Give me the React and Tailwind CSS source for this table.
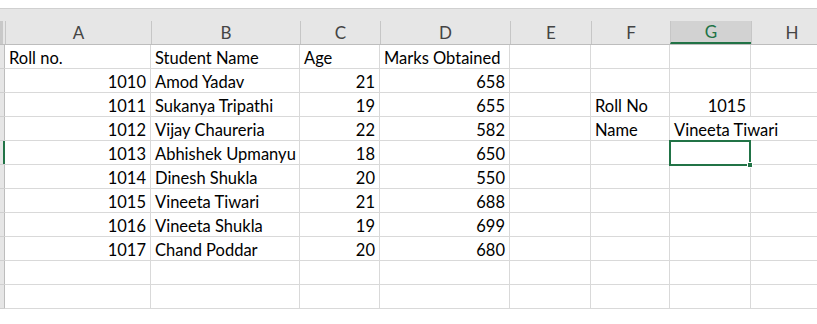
const columns = [
  { key: "A", width: "w-[146px]" },
  { key: "B", width: "w-[149px]" },
  { key: "C", width: "w-[80px]" },
  { key: "D", width: "w-[130px]" },
  { key: "E", width: "w-[81px]" },
  { key: "F", width: "w-[79px]" },
  { key: "G", width: "w-[81px]" },
  { key: "H", width: "w-[81px]" },
];

// each row: values for A..H, numbers are right aligned like excel
const rows = [
  ["Roll no.", "Student Name", "Age", "Marks Obtained", "", "", "", ""],
  [1010, "Amod Yadav", 21, 658, "", "", "", ""],
  [1011, "Sukanya Tripathi", 19, 655, "", "Roll No", 1015, ""],
  [1012, "Vijay Chaureria", 22, 582, "", "Name", "Vineeta Tiwari", ""],
  [1013, "Abhishek Upmanyu", 18, 650, "", "", "", ""],
  [1014, "Dinesh Shukla", 20, 550, "", "", "", ""],
  [1015, "Vineeta Tiwari", 21, 688, "", "", "", ""],
  [1016, "Vineeta Shukla", 19, 699, "", "", "", ""],
  [1017, "Chand Poddar", 20, 680, "", "", "", ""],
  ["", "", "", "", "", "", "", ""],
  ["", "", "", "", "", "", "", ""],
];

function Cell({ value, width, selected, overflow }) {
  const isNum = typeof value === "number";
  return (
    <div
      className={`relative ${width} h-full shrink-0 border-b border-[#d9d9d9] border-r ${
        overflow ? "border-r-transparent" : "border-r-[#d9d9d9]"
      }`}
    >
      {value !== "" && (
        <div
          className={`absolute inset-y-0 flex items-end leading-[20px] whitespace-nowrap ${
            isNum ? "right-[4px]" : "left-[4px]"
          } z-10`}
        >
          {value}
        </div>
      )}
      {selected && (
        <div className="absolute -left-[1px] -top-[1px] -right-[1px] -bottom-[2px] border-2 border-[#217346] z-20">
          <div className="absolute -right-[4px] -bottom-[4px] w-[6px] h-[6px] bg-[#217346] border border-white" />
        </div>
      )}
    </div>
  );
}

export default function App() {
  return (
    <div
      className="w-[817px] h-[324px] overflow-hidden bg-white text-[16.5px] text-black"
      style={{ fontFamily: "Lato, 'Open Sans', sans-serif" }}
    >
      <div className="h-[9px] border-b border-[#d0d0d0]" />

      {/* column headers */}
      <div className="flex h-[36px] bg-[#e6e6e6] border-b border-[#bdbdbd]">
        <div className="w-[5px] shrink-0 pt-[12px]">
          <div className="h-full w-[3px] bg-[#c8c8c8]" />
        </div>
        {columns.map((col) => {
          const active = col.key === "G";
          return (
            <div key={col.key} className={`${col.width} shrink-0 pt-[12px]`}>
              <div
                className={`h-full flex items-center justify-center border-l border-[#c6c6c6] text-[17px] ${
                  active
                    ? "bg-[#d2d2d2] text-[#217346] border-b-2 border-b-[#217346]"
                    : "text-[#444]"
                }`}
              >
                {col.key}
              </div>
            </div>
          );
        })}
      </div>

      {/* rows */}
      {rows.map((row, r) => (
        <div key={r} className="flex h-[24px]">
          <div className="w-[5px] shrink-0 flex bg-[#e6e6e6] border-b border-[#d0d0d0]">
            <div className="w-[3px]" />
            <div className={r === 4 ? "w-[2px] bg-[#217346]" : "w-[2px] border-r border-[#bdbdbd]"} />
          </div>
          {columns.map((col, c) => (
            <Cell
              key={col.key}
              value={row[c]}
              width={col.width}
              selected={r === 4 && col.key === "G"}
              overflow={r === 3 && col.key === "G"}
            />
          ))}
        </div>
      ))}
    </div>
  );
}
